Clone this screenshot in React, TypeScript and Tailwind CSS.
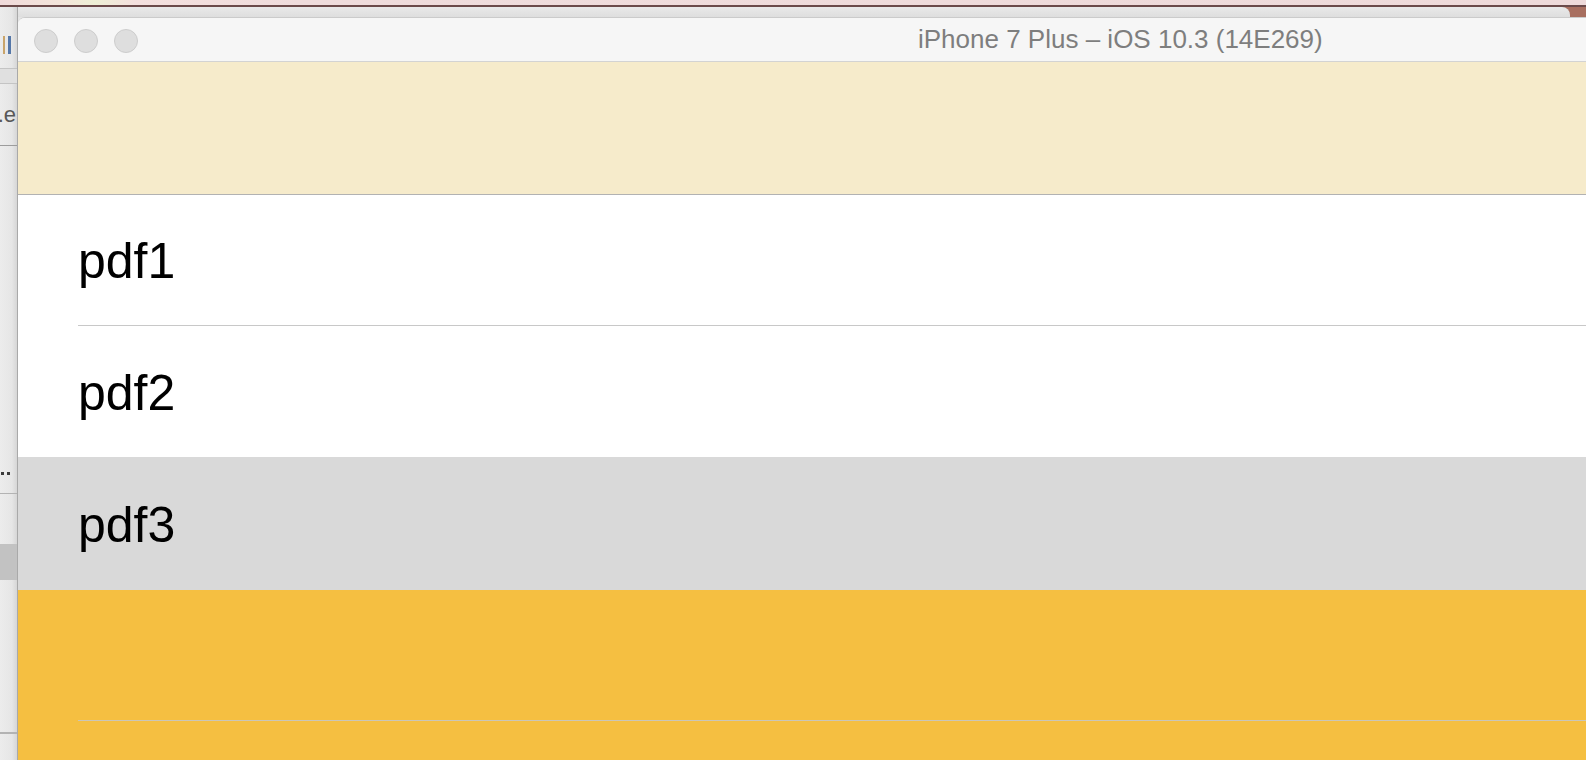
import React from "react";

const font = { fontFamily: '"Liberation Sans", Arial, sans-serif' };

function LeftStrip() {
  return (
    <div
      className="w-[18px] shrink-0 flex flex-col border-r border-[#a9a9a9] bg-[linear-gradient(90deg,#ececec_0%,#e6e6e6_70%,#d6d6d6_100%)] overflow-hidden"
      style={font}
    >
      <div className="h-[29px] shrink-0" />
      <div className="h-[18px] shrink-0 flex gap-[3px] pl-[3px]">
        <div className="w-[2px] h-full bg-[#c9a46a]" />
        <div className="w-[3px] h-full bg-[#5577a8]" />
      </div>
      <div className="h-[14px] shrink-0" />
      <div className="h-[16px] shrink-0 border-y border-[#c4c4c4] bg-[#e0e0e0]" />
      <div className="h-[61px] shrink-0 flex items-center justify-end overflow-hidden">
        <span className="whitespace-nowrap text-[22px] leading-none text-[#585858] pr-[1px]">
          example.e
        </span>
      </div>
      <div className="h-px shrink-0 bg-[#9c9c9c]" />
      <div className="h-[326px] shrink-0" />
      <div className="h-[4px] shrink-0 flex gap-[3px] pl-[1px]">
        <div className="w-[3px] h-[3px] bg-[#3a3a3a]" />
        <div className="w-[3px] h-[3px] bg-[#3a3a3a]" />
      </div>
      <div className="h-[17px] shrink-0" />
      <div className="h-px shrink-0 bg-[#b3b3b3]" />
      <div className="h-[50px] shrink-0" />
      <div className="h-[36px] shrink-0 bg-[#c2c2c2]" />
      <div className="h-[152px] shrink-0" />
      <div className="h-[2px] shrink-0 bg-[#b3b3b3]" />
      <div className="flex-1" />
    </div>
  );
}

function Light() {
  return <div className="w-[24px] h-[24px] rounded-full bg-[#dedede] border border-[#cdcdcd]" />;
}

function Row({
  label,
  bg,
  h,
  sep,
}: {
  label: string;
  bg: string;
  h: string;
  sep: boolean;
}) {
  return (
    <div className={`${bg} ${h} shrink-0 pl-[60px] flex flex-col`}>
      <div
        className={`flex-1 flex items-center pt-[2px] ${sep ? "border-b border-[#c8c8c8]" : ""}`}
      >
        <span className="text-[50px] leading-none text-black" style={font}>
          {label}
        </span>
      </div>
    </div>
  );
}

export default function App() {
  return (
    <div className="w-[1586px] h-[760px] overflow-hidden flex flex-col bg-[#efdcdc]">
      <div className="h-[5px] shrink-0 bg-[linear-gradient(90deg,#f0dada_0px,#f3e4da_60px,#eef0d6_95px,#f4e0de_135px,#efdcdc_300px,#eedada_100%)]" />
      <div className="h-[2px] shrink-0 bg-[#6b4a4a]" />
      <div className="flex flex-1 min-h-0">
        <LeftStrip />
        <div className="flex-1 min-w-0 flex flex-col bg-[#e4e4e4]">
          <div className="h-[10px] shrink-0 flex bg-[#a86f60]">
            <div className="flex-1 mr-[16px] rounded-tr-[8px] bg-[linear-gradient(180deg,#e9e9e9,#dedede)]" />
          </div>
          <div className="flex-1 min-h-0 flex flex-col rounded-tl-[7px] border-t border-[#cbcbcb] overflow-hidden bg-white">
            <div className="h-[44px] shrink-0 bg-[#f6f6f6] border-b border-[#d3d3d3] flex items-center pl-[16px] pt-[2px]">
              <div className="flex gap-[16px]">
                <Light />
                <Light />
                <Light />
              </div>
              <span
                className="ml-[780px] -mt-[3px] whitespace-nowrap text-[26px] leading-none text-[#7e7e7e]"
                style={font}
              >
                iPhone 7 Plus – iOS 10.3 (14E269)
              </span>
            </div>
            <div className="h-[133px] shrink-0 bg-[#f6ebcb] border-b border-[#b2b2b2]" />
            <Row label="pdf1" bg="bg-white" h="h-[131px]" sep />
            <Row label="pdf2" bg="bg-white" h="h-[131px]" sep={false} />
            <Row label="pdf3" bg="bg-[#d9d9d9]" h="h-[133px]" sep={false} />
            <div className="flex-1 bg-[#f5bf41] pl-[60px] flex flex-col">
              <div className="h-[131px] shrink-0 border-b border-[#cbc6b8]" />
            </div>
          </div>
        </div>
      </div>
    </div>
  );
}
